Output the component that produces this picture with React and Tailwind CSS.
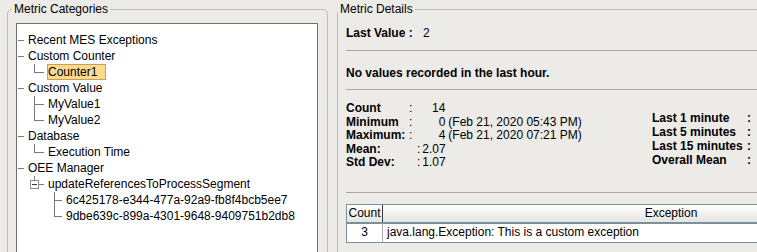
import React from 'react';

const font = "font-['Liberation_Sans',Arial,sans-serif]";

const Label = ({ children, selected = false }) => (
  <span
    className={
      selected
        ? 'ml-[3px] h-4 w-[59px] border border-[#c9a14a] bg-[#fcd98e] leading-[14px]'
        : 'ml-[3px] h-4 border border-transparent leading-[14px]'
    }
  >
    {children}
  </span>
);

const RootNode = ({ children }) => (
  <div className="flex h-4 items-start">
    <span className="mt-[8px] h-px w-[6px] bg-[#7a7a7a]" />
    <Label>{children}</Label>
  </div>
);

// level 1 / level 2 child with tee or elbow connector
const ChildNode = ({ children, last = false, level = 1, selected = false }) => (
  <div className="flex h-4 items-start">
    <span className={level === 1 ? 'ml-[16px] flex' : 'ml-[36px] flex'}>
      {last ? (
        <span
          className={
            level === 1
              ? 'h-[9px] w-[10px] border-b border-l border-[#7a7a7a]'
              : 'h-[9px] w-[8px] border-b border-l border-[#7a7a7a]'
          }
        />
      ) : (
        <span
          className={
            level === 1
              ? 'h-4 w-[10px] border-l border-[#7a7a7a] pt-[8px]'
              : 'h-4 w-[8px] border-l border-[#7a7a7a] pt-[8px]'
          }
        >
          <span className="block h-px w-full bg-[#7a7a7a]" />
        </span>
      )}
    </span>
    <Label selected={selected}>{children}</Label>
  </div>
);

const ExpandedNode = ({ children }) => (
  <div className="flex h-4 items-start">
    <span className="ml-[12px] flex w-[9px] flex-col items-center">
      <span className="h-[4px] w-px bg-[#7a7a7a]" />
      <span className="flex h-[9px] w-[9px] items-center justify-center border border-[#8e8e8e] bg-white">
        <span className="h-px w-[5px] bg-[#3a3a3a]" />
      </span>
    </span>
    <span className="mt-[8px] h-px w-[5px] bg-[#7a7a7a]" />
    <Label>{children}</Label>
  </div>
);

const Separator = ({ className = '' }) => <div className={`h-px w-[620px] bg-[#a8a8a6] ${className}`} />;

const App = () => {
  return (
    <div className={`${font} h-[252px] w-[757px] overflow-hidden bg-[#ecebe7] text-[12px] text-black`}>
      <div className="flex gap-[9px] pl-[7px] pt-[2px]">
        {/* Metric Categories */}
        <fieldset className="h-[290px] w-[321px] shrink-0 rounded-[5px] border border-[#bdbdbb]">
          <legend className="ml-[4px] px-[2px] leading-[14px]">Metric Categories</legend>
          <div className="pl-[8px] pt-[7px]">
            <div className="h-[260px] w-[302px] border border-[#6f6f6f] bg-white pl-px pt-[8px] leading-4">
              <RootNode>Recent MES Exceptions</RootNode>
              <RootNode>Custom Counter</RootNode>
              <ChildNode last selected>Counter1</ChildNode>
              <RootNode>Custom Value</RootNode>
              <ChildNode>MyValue1</ChildNode>
              <ChildNode last>MyValue2</ChildNode>
              <RootNode>Database</RootNode>
              <ChildNode last>Execution Time</ChildNode>
              <RootNode>OEE Manager</RootNode>
              <ExpandedNode>updateReferencesToProcessSegment</ExpandedNode>
              <ChildNode level={2}>6c425178-e344-477a-92a9-fb8f4bcb5ee7</ChildNode>
              <ChildNode level={2} last>9dbe639c-899a-4301-9648-9409751b2db8</ChildNode>
            </div>
          </div>
        </fieldset>

        {/* Metric Details */}
        <fieldset className="h-[290px] w-[660px] shrink-0 rounded-[5px] border border-[#bdbdbb]">
          <legend className="px-[2px] leading-[14px]">Metric Details</legend>
          <div className="pl-[8px] pt-[10px]">
            <div className="flex leading-[14px]">
              <span className="w-[77px] font-bold">Last Value :</span>
              <span>2</span>
            </div>
            <Separator className="mt-[10px]" />
            <div className="mt-[15px] font-bold leading-[14px]">No values recorded in the last hour.</div>
            <Separator className="mt-[9px]" />

            <div className="flex h-[102px]">
              <div className="mt-[12px] w-[306px] leading-[13.5px]">
                <div className="flex">
                  <span className="w-[63px] font-bold">Count</span>
                  <span>:</span>
                  <span className="w-[33px] text-right">14</span>
                </div>
                <div className="flex">
                  <span className="w-[63px] font-bold">Minimum</span>
                  <span>:</span>
                  <span className="w-[33px] text-right">0</span>
                  <span className="ml-[3px]">(Feb 21, 2020 05:43 PM)</span>
                </div>
                <div className="flex">
                  <span className="w-[63px] font-bold">Maximum:</span>
                  <span>:</span>
                  <span className="w-[33px] text-right">4</span>
                  <span className="ml-[3px]">(Feb 21, 2020 07:21 PM)</span>
                </div>
                <div className="flex">
                  <span className="w-[71px] font-bold">Mean:</span>
                  <span>:</span>
                  <span className="ml-[2px]">2.07</span>
                </div>
                <div className="flex">
                  <span className="w-[71px] font-bold">Std Dev:</span>
                  <span>:</span>
                  <span className="ml-[2px]">1.07</span>
                </div>
              </div>
              <div className="mt-[21px] font-bold leading-[14px]">
                <div className="flex">
                  <span className="w-[95px]">Last 1 minute</span>
                  <span>:</span>
                </div>
                <div className="flex">
                  <span className="w-[95px]">Last 5 minutes</span>
                  <span>:</span>
                </div>
                <div className="flex">
                  <span className="w-[95px]">Last 15 minutes</span>
                  <span>:</span>
                </div>
                <div className="flex">
                  <span className="w-[95px]">Overall Mean</span>
                  <span>:</span>
                </div>
              </div>
            </div>

            <Separator />

            <div className="mt-[11px] w-[614px] border border-[#7f8e9d] bg-white">
              <div className="flex h-[19px] border-b-2 border-[#7f8e9d] bg-linear-to-b from-white to-[#e4e4e0] leading-[17px]">
                <div className="w-[36px] border-r border-[#3c3c3c] text-center">Count</div>
                <div className="flex-1 text-center">Exception</div>
              </div>
              <div className="flex h-[18px] leading-[17px]">
                <div className="w-[36px] border-r border-[#a3acb6] text-center">3</div>
                <div className="pl-[4px]">java.lang.Exception: This is a custom exception</div>
              </div>
            </div>
          </div>
        </fieldset>
      </div>
    </div>
  );
};

export default App;
